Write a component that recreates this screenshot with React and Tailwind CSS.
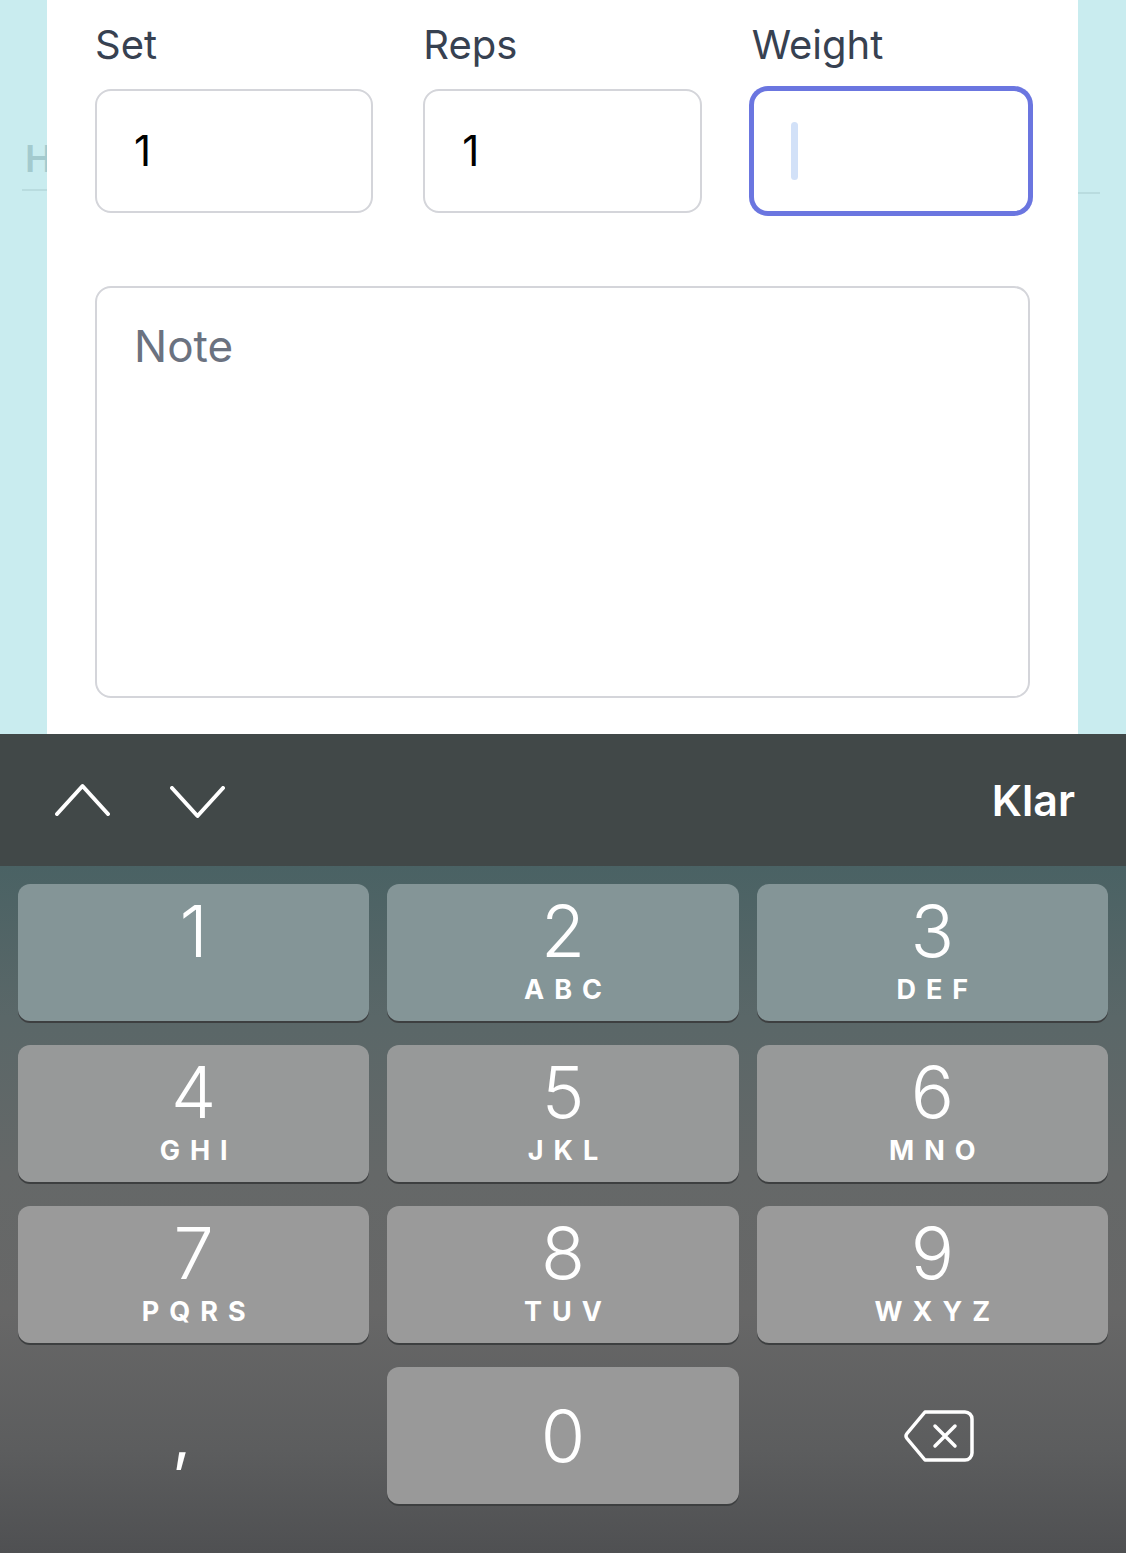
import React from 'react';

const font = { fontFamily: 'Inter, "Noto Sans", sans-serif' };

const rows = [
  { bg: 'bg-[#849597]', keys: [['1', ''], ['2', 'ABC'], ['3', 'DEF']] },
  { bg: 'bg-[#979999]', keys: [['4', 'GHI'], ['5', 'JKL'], ['6', 'MNO']] },
  { bg: 'bg-[#9a9a9a]', keys: [['7', 'PQRS'], ['8', 'TUV'], ['9', 'WXYZ']] },
];

function Key({ digit, letters, bg }) {
  return (
    <div className={`h-[137px] rounded-[12px] ${bg} shadow-[0_2px_0_#3d3f40] flex flex-col items-center pt-[11px]`}>
      <span className="text-[72px] leading-none font-light text-white">{digit}</span>
      {letters && (
        <span className="mt-[9px] pl-[10px] text-[27px] leading-none font-bold tracking-[10px] text-white">
          {letters}
        </span>
      )}
    </div>
  );
}

function Field({ label, value, focused }) {
  return (
    <div className="flex flex-col">
      <label className="text-[40px] leading-none text-[#374151]">{label}</label>
      <div
        className={`mt-[24px] h-[124px] rounded-[16px] bg-white flex items-center pl-[37px] border-2 ${
          focused ? 'border-[#6b76e0] shadow-[0_0_0_3px_#6b76e0]' : 'border-[#d4d5da]'
        }`}
      >
        {focused ? (
          <span className="w-[7px] h-[58px] rounded-full bg-[#d2e1f8]" />
        ) : (
          <span className="text-[42px] leading-none text-black">{value}</span>
        )}
      </div>
    </div>
  );
}

export default function App() {
  return (
    <div className="w-[1126px] h-[1553px] flex flex-col overflow-hidden" style={font}>
      {/* Page behind the sheet */}
      <div className="h-[734px] bg-[#c9ecef] flex">
        <div className="w-[47px] overflow-hidden whitespace-nowrap">
          <div className="pt-[140px] pl-[25px] text-[37px] leading-none font-semibold text-[#a3cace]">H</div>
          <div className="ml-[22px] mt-[12px] border-b-2 border-[#b9dcdf]" />
        </div>

        {/* Sheet */}
        <div className="flex-1 bg-white pl-[48px] pr-[48px] pt-[25px] flex flex-col">
          <div className="grid grid-cols-3 gap-[50px]">
            <Field label="Set" value="1" />
            <Field label="Reps" value="1" />
            <Field label="Weight" focused />
          </div>
          <textarea
            placeholder="Note"
            className="mt-[73px] h-[412px] w-full resize-none rounded-[16px] border-2 border-[#d4d5da] pl-[37px] pt-[36px] text-[44px] leading-none text-black placeholder:text-[#6b7280] outline-none"
          />
        </div>

        <div className="w-[48px]">
          <div className="mt-[192px] mr-[26px] border-b-2 border-[#b9dcdf]" />
        </div>
      </div>

      {/* Keyboard accessory bar */}
      <div className="h-[132px] bg-[#414848] flex items-center pl-[55px] pr-[51px]">
        <svg width="55" height="34" viewBox="0 0 55 34" className="mt-[-2px]">
          <path d="M2 32 L27.5 4 L53 32" fill="none" stroke="white" strokeWidth="4" strokeLinecap="round" strokeLinejoin="round" />
        </svg>
        <svg width="55" height="34" viewBox="0 0 55 34" className="ml-[60px] mt-[6px]">
          <path d="M2 2 L27.5 30 L53 2" fill="none" stroke="white" strokeWidth="4" strokeLinecap="round" strokeLinejoin="round" />
        </svg>
        <span className="ml-auto text-[43px] leading-none font-semibold text-white">Klar</span>
      </div>

      {/* Number pad */}
      <div className="flex-1 bg-[linear-gradient(180deg,#4a6264_0%,#5a6768_22%,#656868_45%,#676767_65%,#5c5d5e_85%,#4f5052_100%)] pt-[18px] px-[18px] flex flex-col gap-[24px]">
        {rows.map((row, i) => (
          <div key={i} className="grid grid-cols-3 gap-[18px]">
            {row.keys.map(([d, l]) => (
              <Key key={d} digit={d} letters={l} bg={row.bg} />
            ))}
          </div>
        ))}
        <div className="grid grid-cols-3 gap-[18px]">
          <div className="h-[137px] flex items-center justify-center pr-[24px]">
            <span className="text-[64px] leading-none font-normal text-white">,</span>
          </div>
          <div className="h-[137px] rounded-[12px] bg-[#999999] shadow-[0_2px_0_#3d3f40] flex items-center justify-center">
            <span className="text-[72px] leading-none font-light text-white">0</span>
          </div>
          <div className="h-[137px] flex items-center justify-center pl-[14px]">
            <svg width="72" height="54" viewBox="0 0 72 54">
              <path
                d="M22 3 H62 a7 7 0 0 1 7 7 V44 a7 7 0 0 1 -7 7 H22 L4 29.5 a4 4 0 0 1 0 -5 Z"
                fill="none"
                stroke="white"
                strokeWidth="3.5"
                strokeLinejoin="round"
              />
              <path d="M32 17 L52 37 M52 17 L32 37" stroke="white" strokeWidth="3.5" strokeLinecap="round" />
            </svg>
          </div>
        </div>
      </div>
    </div>
  );
}
